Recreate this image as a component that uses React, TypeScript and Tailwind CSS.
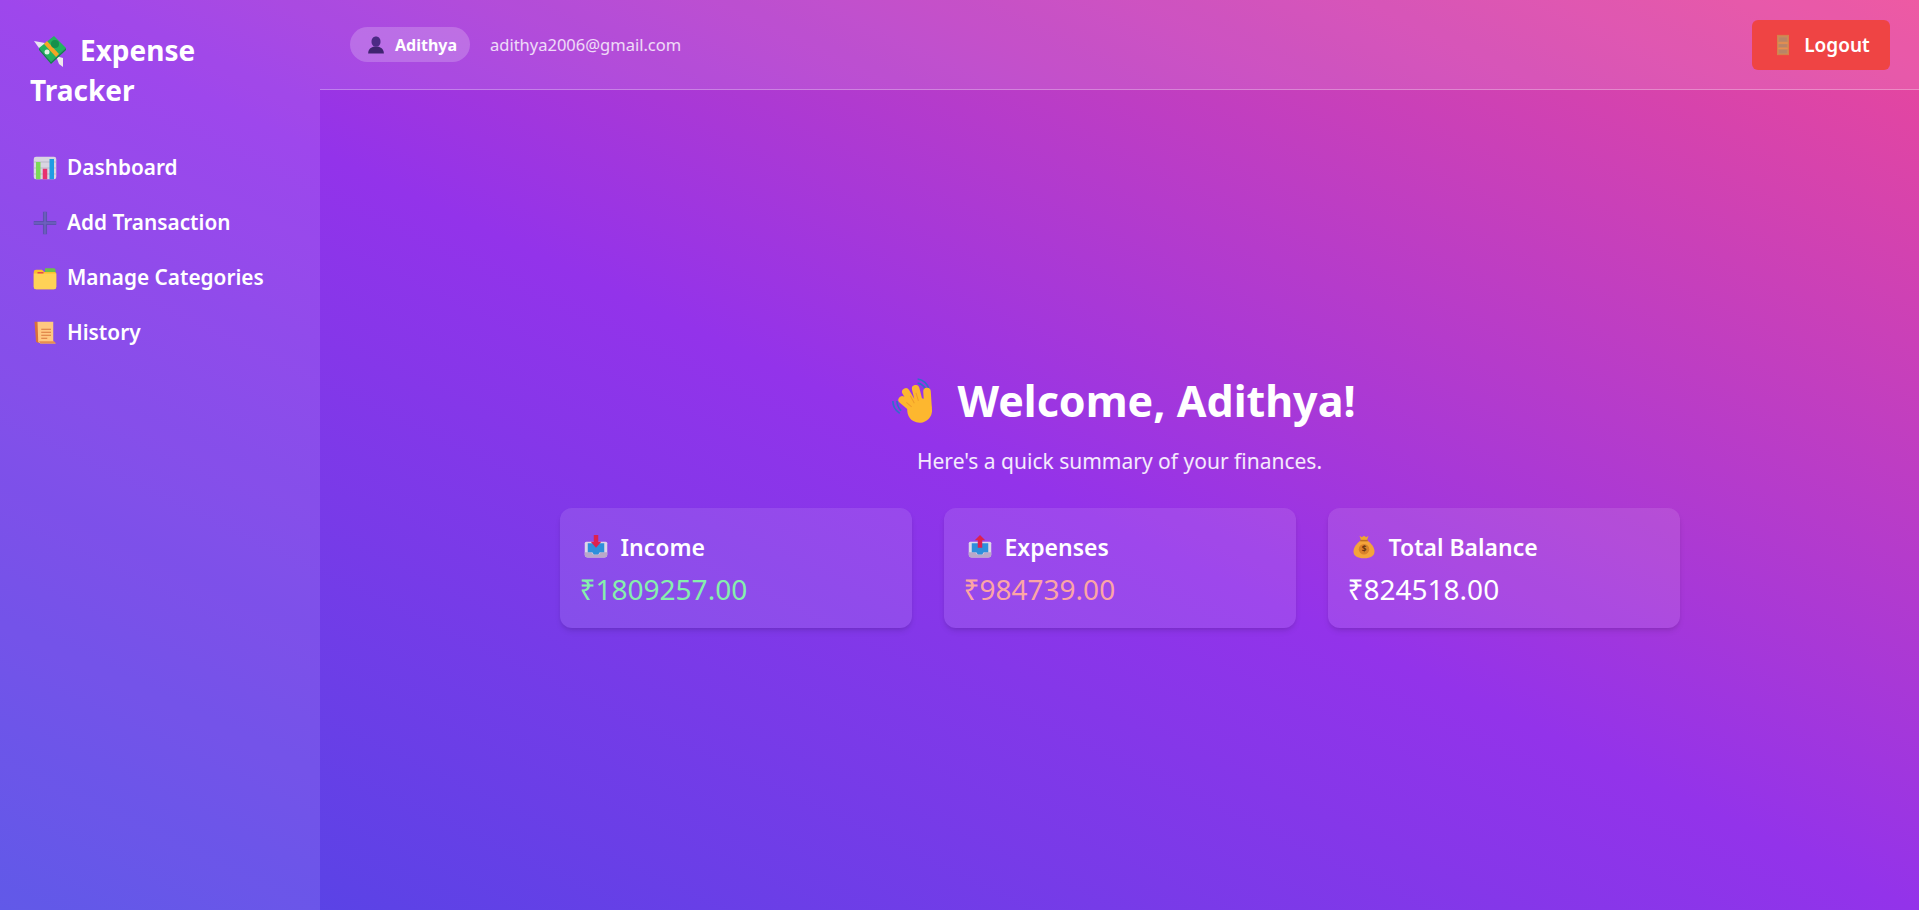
import type { ReactNode } from "react";

const font = "font-['Noto_Sans','Open_Sans',sans-serif]";

const Emoji = ({ size, children }: { size: number; children: ReactNode }) => (
  <svg width={size} height={size} viewBox="0 0 32 32" className="shrink-0 overflow-visible">
    {children}
  </svg>
);

const MoneyWings = ({ size = 32 }: { size?: number }) => (
  <Emoji size={size}>
    <path d="M0 7l11 2 3 5-9 0z" fill="#e9e4f2" />
    <path d="M22 22l7 2 0 9-4-3z" fill="#efe9ec" />
    <path d="M5 14L20 2l12 12-15 14z" fill="#22b35e" />
    <path d="M5 14l12 14 0 2L5 16z" fill="#0e8a44" />
    <path d="M32 14l0 2-15 14 0-2z" fill="#0e8a44" />
    <path d="M10 10l3-3 12 13-3 3z" fill="#f5a524" />
    <circle cx="21" cy="10" r="4" fill="#14904b" />
    <circle cx="13" cy="18" r="2.500" fill="#dff5e6" />
  </Emoji>
);

const BarChart = ({ size = 24 }: { size?: number }) => (
  <Emoji size={size}>
    <rect x="1" y="1" width="30" height="30" rx="3" fill="#d9d5e2" />
    <path d="M1 8h30M1 16h30M1 24h30" stroke="#b4afc0" strokeWidth="1" />
    <rect x="4" y="8" width="6" height="23" fill="#7cd957" />
    <rect x="13" y="17" width="6" height="14" fill="#e8316f" />
    <rect x="22" y="4" width="6" height="27" fill="#1f9be3" />
  </Emoji>
);

const PlusIcon = ({ size = 24 }: { size?: number }) => (
  <Emoji size={size}>
    <path d="M16 1v30M1 16h30" stroke="#5f50b0" strokeWidth="5.500" />
    <path d="M16 1v30M1 16h30" stroke="#6f61bf" strokeWidth="2" />
  </Emoji>
);

const FolderIcon = ({ size = 24 }: { size?: number }) => (
  <Emoji size={size}>
    <path d="M16 3h12a2 2 0 0 1 2 2v5H16z" fill="#6cc04a" />
    <path d="M1 8a3 3 0 0 1 3-3h8l3 3h14a2 2 0 0 1 2 2v18a3 3 0 0 1-3 3H4a3 3 0 0 1-3-3z" fill="#fbc02d" />
    <path d="M1 10h30v18a3 3 0 0 1-3 3H4a3 3 0 0 1-3-3z" fill="#ffd257" />
    <rect x="6" y="8" width="8" height="2" fill="#e5484d" />
  </Emoji>
);

const ScrollIcon = ({ size = 24 }: { size?: number }) => (
  <Emoji size={size}>
    <path d="M2 1h4l2 2v26H6l-2-2z" fill="#d9703a" />
    <path d="M6 1h21v26l3 3H10l-3-2z" fill="#ffc880" />
    <path d="M8 27h20l3 3H10z" fill="#e88e4f" />
    <path d="M11 11h13M11 15h13M11 19h13M11 23h8" stroke="#d9763c" strokeWidth="1.600" />
  </Emoji>
);

const BustIcon = ({ size = 18 }: { size?: number }) => (
  <Emoji size={size}>
    <path d="M16 1c5 0 8 4 8 9s-3 9-8 9-8-4-8-9 3-9 8-9z" fill="#4c2a85" />
    <path d="M2 31c0-7 4-10 9-12h10c5 2 9 5 9 12z" fill="#3f2470" />
  </Emoji>
);

const DoorIcon = ({ size = 22 }: { size?: number }) => (
  <Emoji size={size}>
    <rect x="8" y="2" width="16" height="28" fill="#c98a5c" />
    <rect x="8" y="2" width="16" height="28" fill="none" stroke="#d6824a" strokeWidth="1.500" />
    <path d="M9 13h14M9 21h14" stroke="#e88e4f" strokeWidth="2" />
    <path d="M10.500 5h11v6h-11zM10.500 15h11v4h-11zM10.500 23h11v5h-11z" fill="#b98467" />
  </Emoji>
);

const WaveIcon = ({ size = 44 }: { size?: number }) => (
  <Emoji size={size}>
    <g transform="translate(-4 0)">
      <path d="M19 0c4 .5 7.500 3.500 8.500 8M19 3c3 .5 5 2.500 6 5" stroke="#2f6fc9" strokeWidth="1.200" fill="none" />
      <path d="M1 16c0 4 2 7 5 9M4 16c0 3 1 5 3 7" stroke="#2f6fc9" strokeWidth="1.200" fill="none" />
      <g transform="rotate(-14 20 23)">
        <path d="M17 22L10 12.500M18 21L14 7.500M21.500 20V7M27 22l2-11" stroke="#fdb72f" strokeWidth="5.500" strokeLinecap="round" fill="none" />
        <circle cx="20.500" cy="23" r="9" fill="#fdb72f" />
        <path d="M12.500 15l3 4M16.500 11l1.500 6M21 10l.3 6" stroke="#ee9b2b" strokeWidth=".7" fill="none" />
      </g>
    </g>
  </Emoji>
);

const TrayIcon = ({ size = 24, up = false }: { size?: number; up?: boolean }) => (
  <Emoji size={size}>
    <path d="M3 9h26a2 2 0 0 1 2 2v15a4 4 0 0 1-4 4H5a4 4 0 0 1-4-4V11a2 2 0 0 1 2-2z" fill="#ddd6e8" />
    <path d="M1 23h9l2 3h8l2-3h9v3a4 4 0 0 1-4 4H5a4 4 0 0 1-4-4z" fill="#b9a8c9" />
    <path d="M5 11h22v12h-6l-2 3h-6l-2-3H5z" fill="#2e8fdc" />
    {up ? (
      <path d="M16 0l7 7h-4v10h-6V7H9z" fill="#dc2150" />
    ) : (
      <path d="M13 0h6v9h4l-7 8-7-8h4z" fill="#dc2150" />
    )}
  </Emoji>
);

const MoneyBag = ({ size = 24 }: { size?: number }) => (
  <Emoji size={size}>
    <path d="M10 1l3 2 3-2 3 2 3-2-2 6h-8z" fill="#f0a630" />
    <path d="M12 7h8c6 4 10 10 10 15 0 6-5 9-14 9S2 28 2 22c0-5 4-11 10-15z" fill="#f4a43a" />
    <path d="M11 6.500h10v2H11z" fill="#bf6f22" />
    <circle cx="16" cy="19" r="7" fill="#d9822b" />
    <text x="16" y="23" textAnchor="middle" fontSize="11" fontWeight="700" fill="#6b3410" fontFamily="Noto Sans, sans-serif">$</text>
  </Emoji>
);

const links = [
  { label: "Dashboard", icon: BarChart },
  { label: "Add Transaction", icon: PlusIcon },
  { label: "Manage Categories", icon: FolderIcon },
  { label: "History", icon: ScrollIcon },
];

const cards = [
  { title: "Income", value: "₹1809257.00", color: "text-[#86efac]", icon: <TrayIcon /> },
  { title: "Expenses", value: "₹984739.00", color: "text-[#fca5a5]", icon: <TrayIcon up /> },
  { title: "Total Balance", value: "₹824518.00", color: "text-white", icon: <MoneyBag /> },
];

const App = () => {
  return (
    <div className={`${font} flex h-[910px] overflow-hidden text-white bg-[linear-gradient(to_top_right,#4f46e5,#9333ea,#ec4899)]`}>
      <aside className="w-[320px] shrink-0 bg-white/10 pt-[30px] pl-[30px] pr-6">
        <h1 className="text-[28px] leading-[40px] font-bold">
          <span className="inline-block w-[50px] pl-1 align-[-5px]">
            <MoneyWings />
          </span>
          Expense
          <br />
          Tracker
        </h1>
        <ul className="mt-[44px] flex flex-col gap-[27px]">
          {links.map(({ label, icon: Icon }) => (
            <li key={label} className="flex h-7 items-center gap-[10px] pl-[3px] text-[20.800px] font-semibold">
              <Icon />
              {label}
            </li>
          ))}
        </ul>
      </aside>

      <div className="flex min-w-0 flex-1 flex-col">
        <header className="flex h-[90px] shrink-0 items-center justify-between border-b border-white/30 bg-white/10 pl-[30px] pr-[29px]">
          <div className="flex items-center gap-5">
            <span className="flex h-[35px] w-[120px] items-center justify-center gap-[10px] rounded-full bg-white/20 pl-1 text-[16px] font-bold">
              <BustIcon />
              Adithya
            </span>
            <span className="pt-[2px] text-[16.500px] text-white/80">adithya2006@gmail.com</span>
          </div>
          <button className="flex h-[50px] w-[138px] items-center justify-center gap-[10px] rounded-md bg-[#ef4444] pt-px text-[19px] font-semibold">
            <DoorIcon />
            Logout
          </button>
        </header>

        <main className="flex flex-1 flex-col items-center justify-center">
          <h2 className="ml-[14px] flex h-[56px] items-center gap-[16px] pt-[2px] text-[43px] font-bold">
            <WaveIcon />
            Welcome, Adithya!
          </h2>
          <p className="mt-[18px] text-[21px] leading-[30px] text-white/90">Here's a quick summary of your finances.</p>
          <div className="mt-8 grid w-[1120px] grid-cols-3 gap-8">
            {cards.map((card) => (
              <div key={card.title} className="h-[120px] rounded-xl bg-white/10 p-5 shadow-md">
                <div className="flex h-[38px] items-center gap-[13px] pl-1 text-[23px] font-semibold">
                  {card.icon}
                  {card.title}
                </div>
                <div className={`mt-[2px] text-[28px] leading-[42px] ${card.color}`}>{card.value}</div>
              </div>
            ))}
          </div>
        </main>
      </div>
    </div>
  );
};

export default App;
